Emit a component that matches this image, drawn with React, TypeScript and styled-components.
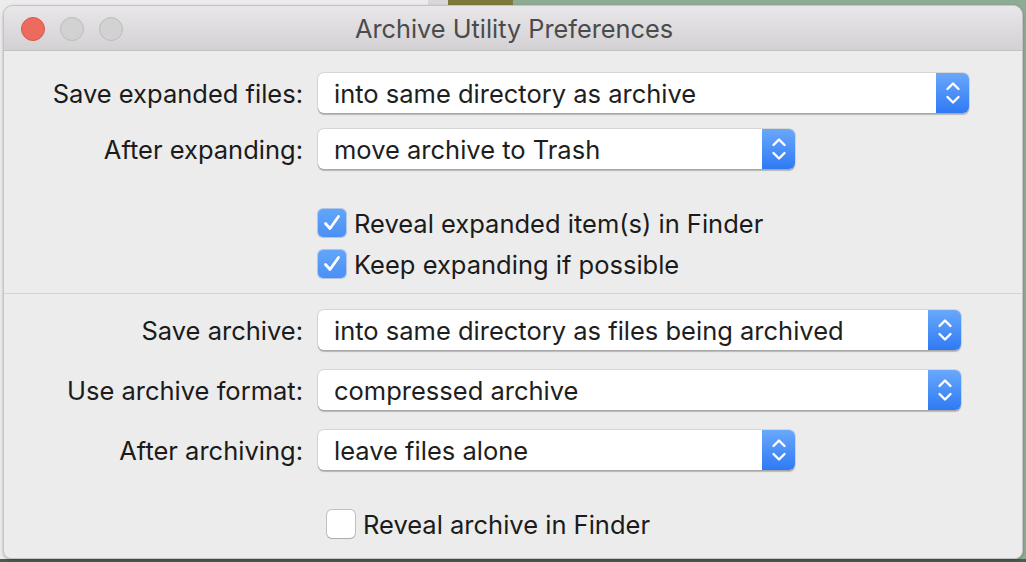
import styled, { createGlobalStyle } from "styled-components";

const GlobalStyle = createGlobalStyle`
  html, body {
    margin: 0;
    padding: 0;
    width: 1026px;
    height: 562px;
    overflow: hidden;
  }
  body {
    font-family: Inter, "Liberation Sans", sans-serif;
    background:
      linear-gradient(to top, #4c5a4f 0 3px, transparent 3px),
      linear-gradient(90deg, #ececec 0 428px, #d8d8d8 428px 448px, #7d7a3c 448px 513px, #8eab95 513px);
  }
`;

const Window = styled.div`
  margin: 5px 3px 0 3px;
  height: 554px;
  box-sizing: border-box;
  background: #ececec;
  border: 1px solid #c4c4c4;
  border-radius: 10px 10px 8px 8px;
  overflow: hidden;
  display: flex;
  flex-direction: column;
  box-shadow: 0 1px 3px rgba(0, 0, 0, 0.25);
`;

const TitleBar = styled.div`
  height: 44px;
  flex: none;
  position: relative;
  display: flex;
  align-items: center;
  justify-content: center;
  background: linear-gradient(#e9e7e9, #d3d1d3);
  border-bottom: 1px solid #c2c2c2;
`;

const Lights = styled.div`
  position: absolute;
  left: 17px;
  top: 11px;
  display: flex;
  gap: 15px;
`;

const Light = styled.span<{ $color: string; $ring: string }>`
  width: 24px;
  height: 24px;
  border-radius: 50%;
  box-sizing: border-box;
  background: ${(p) => p.$color};
  border: 1px solid ${(p) => p.$ring};
`;

const Title = styled.div`
  font-size: 25.3px;
  color: #4b4b4b;
  margin-left: 2px;
`;

const Section = styled.div<{ $top: number; $bottom: number }>`
  padding: ${(p) => p.$top}px 0 ${(p) => p.$bottom}px 0;
  display: flex;
  flex-direction: column;
`;

const Divider = styled.div`
  height: 1px;
  background: #d4d4d4;
  flex: none;
`;

const Row = styled.div<{ $gap?: number }>`
  display: flex;
  align-items: center;
  margin-top: ${(p) => p.$gap ?? 0}px;
`;

const Label = styled.div`
  width: 314px;
  padding-right: 15px;
  box-sizing: border-box;
  text-align: right;
  font-size: 25.5px;
  color: #1b1b1b;
`;

const Popup = styled.div<{ $width: number }>`
  width: ${(p) => p.$width}px;
  height: 40px;
  box-sizing: border-box;
  display: flex;
  align-items: stretch;
  background: #ffffff;
  border-radius: 6px;
  box-shadow: 0 0 0 1px rgba(0, 0, 0, 0.09), 0 1.5px 1px rgba(0, 0, 0, 0.22);
  overflow: hidden;
`;

const PopupText = styled.div`
  flex: 1;
  display: flex;
  align-items: center;
  padding-left: 16px;
  font-size: 25.5px;
  color: #1e1e1e;
`;

const Stepper = styled.div`
  width: 33px;
  flex: none;
  display: flex;
  align-items: center;
  justify-content: center;
  background: linear-gradient(#69a8fb, #2f7af5);
`;

const CheckRow = styled.div<{ $indent: number; $gap?: number }>`
  display: flex;
  align-items: center;
  height: 36px;
  padding-left: ${(p) => p.$indent}px;
  margin-top: ${(p) => p.$gap ?? 0}px;
  gap: 8px;
  font-size: 25.5px;
  color: #1b1b1b;
`;

const Box = styled.span<{ $checked?: boolean }>`
  width: 28px;
  height: 28px;
  box-sizing: border-box;
  border-radius: 5px;
  display: flex;
  align-items: center;
  justify-content: center;
  background: ${(p) => (p.$checked ? "linear-gradient(#62a6fa, #4a8ff4)" : "#ffffff")};
  box-shadow: ${(p) =>
    p.$checked
      ? "0 0 0 1px rgba(40, 110, 220, 0.3)"
      : "0 0 0 1px rgba(0, 0, 0, 0.18), 0 1px 1px rgba(0, 0, 0, 0.12)"};
`;

function Chevrons() {
  return (
    <svg width="16" height="26" viewBox="0 0 16 26">
      <path d="M2.5 9 L8 3.5 L13.5 9" fill="none" stroke="#fff" strokeWidth="2.4" strokeLinecap="round" strokeLinejoin="round" />
      <path d="M2.5 17 L8 22.5 L13.5 17" fill="none" stroke="#fff" strokeWidth="2.4" strokeLinecap="round" strokeLinejoin="round" />
    </svg>
  );
}

function Check() {
  return (
    <svg width="22" height="22" viewBox="0 0 22 22">
      <path d="M4.5 11.5 L9 16.5 L17.5 4.5" fill="none" stroke="#fff" strokeWidth="2.8" strokeLinecap="round" strokeLinejoin="round" />
    </svg>
  );
}

function Select({ label, value, width, gap }: { label: string; value: string; width: number; gap?: number }) {
  return (
    <Row $gap={gap}>
      <Label>{label}</Label>
      <Popup $width={width}>
        <PopupText>{value}</PopupText>
        <Stepper>
          <Chevrons />
        </Stepper>
      </Popup>
    </Row>
  );
}

function Checkbox({ text, checked, indent, gap }: { text: string; checked?: boolean; indent: number; gap?: number }) {
  return (
    <CheckRow $indent={indent} $gap={gap}>
      <Box $checked={checked}>{checked && <Check />}</Box>
      {text}
    </CheckRow>
  );
}

export default function App() {
  return (
    <>
      <GlobalStyle />
      <Window>
        <TitleBar>
          <Lights>
            <Light $color="#ec6a5e" $ring="#d9574b" />
            <Light $color="#d3d2d3" $ring="#bdbcbd" />
            <Light $color="#d3d2d3" $ring="#bdbcbd" />
          </Lights>
          <Title>Archive Utility Preferences</Title>
        </TitleBar>

        <Section $top={22} $bottom={11}>
          <Select label="Save expanded files:" value="into same directory as archive" width={651} />
          <Select label="After expanding:" value="move archive to Trash" width={477} gap={16} />
          <Checkbox text="Reveal expanded item(s) in Finder" checked indent={314} gap={36} />
          <Checkbox text="Keep expanding if possible" checked indent={314} gap={5} />
        </Section>

        <Divider />

        <Section $top={16} $bottom={0}>
          <Select label="Save archive:" value="into same directory as files being archived" width={643} />
          <Select label="Use archive format:" value="compressed archive" width={643} gap={20} />
          <Select label="After archiving:" value="leave files alone" width={477} gap={20} />
          <Checkbox text="Reveal archive in Finder" indent={323} gap={36} />
        </Section>
      </Window>
    </>
  );
}
